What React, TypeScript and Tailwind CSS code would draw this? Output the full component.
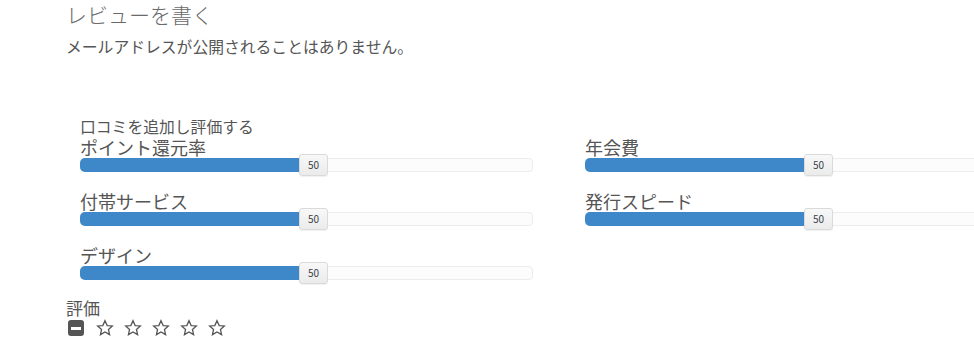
import React from "react";

const font = { fontFamily: '"Noto Sans CJK JP", "Noto Sans", sans-serif' };

function Slider({ label }: { label: string }) {
  return (
    <div className="flex flex-col">
      <div className="h-[20px] leading-[20px] text-[18px] text-[#555] whitespace-nowrap">{label}</div>
      <div className="relative mt-[1px] h-[14px] w-[453px] rounded-[4px] border border-[#ececec] bg-[#fcfcfc]">
        <div className="absolute left-[-1px] top-[-1px] h-[14px] w-[232px] rounded-l-[5px] bg-[#3e88c9]" />
        <div className="absolute left-[218px] top-[-5px] flex h-[22px] w-[29px] items-center justify-center rounded-[3px] border border-[#dadada] bg-gradient-to-b from-[#f8f8f8] to-[#ebebeb] text-[10px] leading-none text-[#3a3f48] shadow-[0_1px_1px_rgba(0,0,0,0.06)]">
          50
        </div>
      </div>
    </div>
  );
}

function Star() {
  return (
    <svg width="18" height="18" viewBox="0 0 24 24" className="block">
      <polygon
        points="12,2.2 14.9,8.7 21.8,9.3 16.6,13.9 18.1,20.8 12,17.2 5.9,20.8 7.4,13.9 2.2,9.3 9.1,8.7"
        fill="none"
        stroke="#555"
        strokeWidth="1.7"
        strokeLinejoin="miter"
      />
    </svg>
  );
}

export default function App() {
  return (
    <div className="w-[974px] h-[342px] overflow-hidden bg-white" style={font}>
      <div className="pl-[66px]">
        <div className="h-[28px] leading-[28px] text-[21px] font-light text-[#6a6a6a]">レビューを書く</div>
        <div className="mt-[9px] h-[20px] leading-[20px] text-[15.8px] text-[#555]">
          メールアドレスが公開されることはありません。
        </div>
        <div className="pl-[14px]">
          <div className="mt-[60px] h-[19px] leading-[19px] text-[15.8px] text-[#555]">口コミを追加し評価する</div>
          <div className="mt-[1px] grid grid-cols-[453px_453px] gap-x-[52px] gap-y-[19px]">
            <Slider label="ポイント還元率" />
            <Slider label="年会費" />
            <Slider label="付帯サービス" />
            <Slider label="発行スピード" />
            <Slider label="デザイン" />
          </div>
        </div>
        <div className="mt-[18px] h-[20px] leading-[20px] text-[17px] text-[#555]">評価</div>
        <div className="flex h-[20px] items-center gap-[10px] pl-[2px]">
          <div className="flex h-[16px] w-[16px] items-center justify-center rounded-[3px] bg-[#555]">
            <div className="h-[3px] w-[10px] bg-white" />
          </div>
          <div className="ml-[2px] flex gap-[10px]">
            <Star />
            <Star />
            <Star />
            <Star />
            <Star />
          </div>
        </div>
      </div>
    </div>
  );
}
